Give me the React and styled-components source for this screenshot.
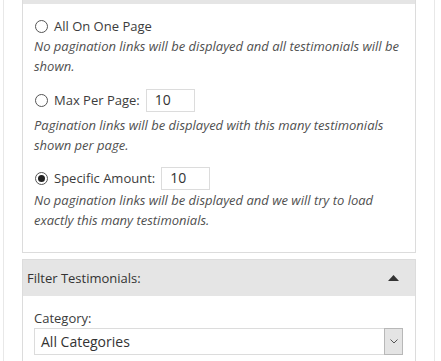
import React from "react";
import styled, { createGlobalStyle } from "styled-components";

const GlobalStyle = createGlobalStyle`
  html, body {
    margin: 0;
    padding: 0;
    background: #fff;
    overflow: hidden;
  }
  body {
    font-family: "Open Sans", "Liberation Sans", sans-serif;
    color: #444;
  }
`;

const Wrapper = styled.div`
  margin-left: 3px;
  width: 432px;
  height: 361px;
  box-sizing: border-box;
  border-left: 1px solid #e8e8e8;
  border-right: 1px solid #e8e8e8;
  padding: 0 18px;
  display: flex;
  flex-direction: column;
  gap: 6px;
`;

const Panel = styled.div`
  border: 1px solid #dcdcdc;
  border-top: ${(p) => (p.$cut ? "none" : "1px solid #dcdcdc")};
  background: #fff;
`;

const PanelHeader = styled.div`
  height: ${(p) => (p.$cut ? "4px" : "36px")};
  background: #e5e5e5;
  display: flex;
  align-items: center;
  justify-content: space-between;
  padding: 0 16px 0 4px;
  font-size: 13px;
  color: #333;
`;

const PanelBody = styled.div`
  padding: ${(p) => p.$pad || "12px 11px 22px"};
  display: flex;
  flex-direction: column;
`;

const Option = styled.div`
  display: flex;
  flex-direction: column;
  margin-top: ${(p) => p.$top || "0"};
`;

const Row = styled.label`
  display: flex;
  align-items: center;
  height: ${(p) => (p.$withInput ? "24px" : "20px")};
  font-size: 13px;
  color: #3c3c3c;
  padding-left: 1px;
`;

const Radio = styled.span`
  width: 11px;
  height: 11px;
  border: 1px solid #555;
  border-radius: 50%;
  margin-right: 6px;
  display: flex;
  align-items: center;
  justify-content: center;
  &::after {
    content: "";
    display: ${(p) => (p.$checked ? "block" : "none")};
    width: 7px;
    height: 7px;
    border-radius: 50%;
    background: #222;
  }
`;

const NumberBox = styled.span`
  margin-left: 6px;
  width: 49px;
  height: 23px;
  box-sizing: border-box;
  border: 1px solid #dcdcdc;
  padding: 0 8px;
  font-size: 14px;
  line-height: 20px;
  color: #333;
`;

const Desc = styled.p`
  margin: ${(p) => p.$top || "0"} 0 0;
  font-size: 13px;
  font-style: italic;
  line-height: 20px;
  color: #505050;
`;

const FieldLabel = styled.div`
  font-size: 13px;
  line-height: 20px;
  color: #3c3c3c;
`;

const Select = styled.div`
  display: flex;
  align-items: stretch;
  height: 27px;
  box-sizing: border-box;
  border: 1px solid #dcdcdc;
  font-size: 14px;
  color: #333;
`;

const SelectText = styled.div`
  flex: 1;
  display: flex;
  align-items: center;
  padding-left: 6px;
`;

const SelectButton = styled.div`
  width: 17px;
  background: #e4e4e4;
  border: 1px solid #b8b8b8;
  margin: -1px -1px -1px 0;
  display: flex;
  align-items: center;
  justify-content: center;
`;

const options = [
  {
    label: "All On One Page",
    desc: "No pagination links will be displayed and all testimonials will be shown.",
    top: "0",
    descTop: "0",
  },
  {
    label: "Max Per Page:",
    value: "10",
    desc: "Pagination links will be displayed with this many testimonials shown per page.",
    top: "12px",
    descTop: "3px",
  },
  {
    label: "Specific Amount:",
    value: "10",
    checked: true,
    desc: "No pagination links will be displayed and we will try to load exactly this many testimonials.",
    top: "11px",
    descTop: "0",
  },
];

export default function App() {
  return (
    <>
      <GlobalStyle />
      <Wrapper>
        <Panel $cut>
          <PanelHeader $cut />
          <PanelBody>
            {options.map((o) => (
              <Option key={o.label} $top={o.top}>
                <Row $withInput={!!o.value}>
                  <Radio $checked={o.checked} />
                  {o.label}
                  {o.value && <NumberBox>{o.value}</NumberBox>}
                </Row>
                <Desc $top={o.descTop}>{o.desc}</Desc>
              </Option>
            ))}
          </PanelBody>
        </Panel>
        <Panel>
          <PanelHeader>
            Filter Testimonials:
            <svg width="11" height="6" viewBox="0 0 11 6">
              <path d="M0 6 L5.5 0 L11 6 Z" fill="#333" />
            </svg>
          </PanelHeader>
          <PanelBody $pad="12px 12px 12px 11px">
            <FieldLabel>Category:</FieldLabel>
            <Select>
              <SelectText>All Categories</SelectText>
              <SelectButton>
                <svg width="8" height="5" viewBox="0 0 8 5">
                  <path d="M0.5 0.5 L4 4 L7.5 0.5" fill="none" stroke="#555" strokeWidth="1" />
                </svg>
              </SelectButton>
            </Select>
          </PanelBody>
        </Panel>
      </Wrapper>
    </>
  );
}
